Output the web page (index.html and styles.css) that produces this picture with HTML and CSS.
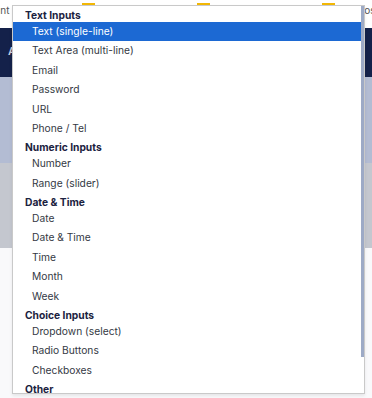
FILE: index.html
```html
<!DOCTYPE html>
<html lang="en">
<head>
    <meta charset="UTF-8">
    <meta name="viewport" content="width=device-width, initial-scale=1.0">
    <title>Form Builder - Field Type</title>
    <link rel="stylesheet" href="styles.css">
</head>
<body>

<div class="page">
    <div class="topbar">
        <span class="crumb crumb-left">Account</span>
        <span class="tab-mark mark-1"></span>
        <span class="tab-mark mark-2"></span>
        <span class="tab-mark mark-3"></span>
        <span class="crumb crumb-right">Posts</span>
    </div>
    <div class="hero"><span class="hero-letter">A</span></div>
    <div class="band"></div>
    <div class="band-gray"></div>
    <div class="content"></div>
</div>

<div class="listbox">
    <div class="scroll-thumb"></div>
    <div class="group">Text Inputs</div>
    <div class="option selected">Text (single-line)</div>
    <div class="option">Text Area (multi-line)</div>
    <div class="option">Email</div>
    <div class="option">Password</div>
    <div class="option">URL</div>
    <div class="option">Phone / Tel</div>
    <div class="group">Numeric Inputs</div>
    <div class="option">Number</div>
    <div class="option">Range (slider)</div>
    <div class="group">Date &amp; Time</div>
    <div class="option">Date</div>
    <div class="option">Date &amp; Time</div>
    <div class="option">Time</div>
    <div class="option">Month</div>
    <div class="option">Week</div>
    <div class="group">Choice Inputs</div>
    <div class="option">Dropdown (select)</div>
    <div class="option">Radio Buttons</div>
    <div class="option">Checkboxes</div>
    <div class="group">Other</div>
</div>

</body>
</html>
```
FILE: styles.css
```css
body {
    font-family: Inter, "Noto Sans", sans-serif;
    margin: 0;
    padding: 0;
    background-color: #f9f9fb;
    overflow: hidden;
}
.page {
    display: flex;
    flex-direction: column;
    height: 398px;
}
.topbar {
    position: relative;
    height: 28px;
    background-color: #fff;
    display: flex;
    justify-content: space-between;
    font-size: 10px;
    color: #555;
}
.crumb {
    margin-top: 4px;
}
.crumb-left {
    margin-left: -30px;
}
.crumb-right {
    margin-right: -12px;
}
.tab-mark {
    position: absolute;
    top: 3px;
    width: 13px;
    height: 2px;
    background-color: #f2b705;
}
.mark-1 { left: 82px; }
.mark-2 { left: 197px; }
.mark-3 { left: 322px; }
.hero {
    height: 49px;
    background-color: #14214a;
}
.hero-letter {
    display: inline-block;
    margin: 16px 0 0 8px;
    color: #c9cfe0;
    font-size: 11px;
    font-weight: 600;
}
.band {
    height: 86px;
    background-color: #b3bcd3;
}
.band-gray {
    height: 85px;
    background-color: #c4c7cf;
}
.content {
    flex: 1;
    background-color: #f9f9fb;
}
.listbox {
    position: absolute;
    left: 12px;
    top: 5px;
    width: 351px;
    height: 387px;
    border: 1px solid #c9c9c9;
    background-color: #fff;
    overflow: hidden;
    box-shadow: 0 2px 3px rgba(0, 0, 0, 0.08);
    font-size: 10.25px;
}
.scroll-thumb {
    position: absolute;
    right: 0;
    top: 0;
    width: 3px;
    height: 351px;
    background-color: #9daac6;
}
.group {
    height: 15.5px;
    line-height: 15px;
    padding: 1.5px 0 0 12px;
    box-sizing: border-box;
    font-weight: 700;
    color: #1b2240;
}
.option {
    height: 19.5px;
    line-height: 19.5px;
    padding-left: 19px;
    margin-right: 3px;
    color: #343944;
}
.option.selected {
    background-color: #1c69d3;
    color: #fff;
}
```
